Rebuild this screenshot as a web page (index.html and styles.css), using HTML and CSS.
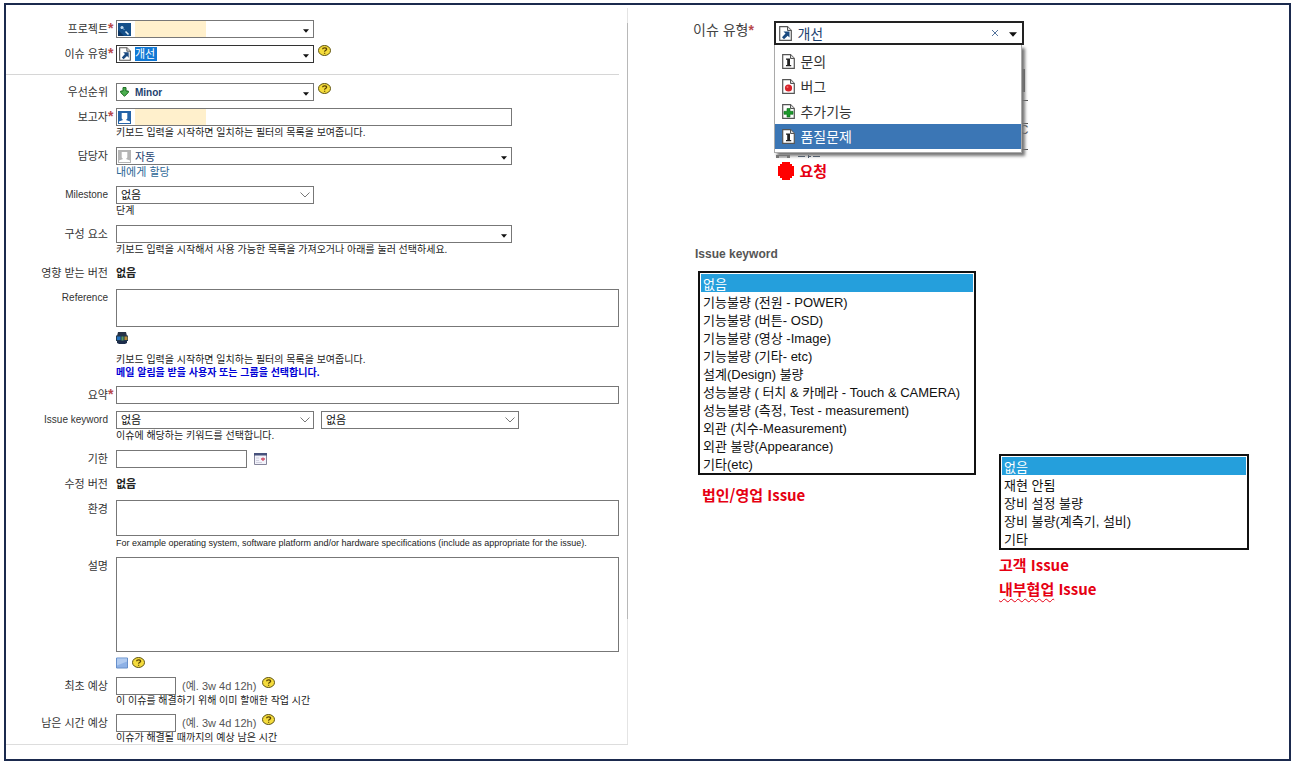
FILE: index.html
```html
<!DOCTYPE html>
<html lang="ko">
<head>
<meta charset="utf-8">
<title>Issue</title>
<link rel="stylesheet" href="styles.css">
</head>
<body>
<svg class="sprite" aria-hidden="true">
  <symbol id="help" viewBox="0 0 13 11"><ellipse cx="6.5" cy="5.5" rx="6" ry="5" fill="#f5dc3c" stroke="#5d5210"/><path d="M4.6 4.2C4.6 2.4 8.6 2.3 8.6 4.2C8.6 5.4 6.6 5.2 6.6 6.7M6.6 7.7V8.8" fill="none" stroke="#5a4300" stroke-width="1.3"/></symbol>
  <symbol id="project" viewBox="0 0 13 13"><path d="M0 0H13V13H0Z" fill="#15508a"/><path d="M0 7L6 13H0Z" fill="#0c3562"/><circle cx="4" cy="4.5" r="1.5" fill="#d3e6f5"/><path d="M4 4.5L6.5 7" stroke="#7fb0d8"/><path d="M7.5 8.5L10.5 11.5" stroke="#e4f1fa" stroke-width="1.6"/></symbol>
  <symbol id="doc" viewBox="0 0 13 15"><path d="M.7 .7H8.5L12.3 4.5V14.3H.7Z" fill="#fff" stroke="#555" stroke-width="1.2"/><path d="M8.5 .7V4.5H12.3" fill="#ddd" stroke="#555"/></symbol>
  <symbol id="improve" viewBox="0 0 13 15"><use href="#doc"/><path d="M4.5 5.5H10.5V11.5L8.7 9.8L5 13.2L3 11.2L6.5 7.6Z" fill="#1b4a80"/></symbol>
  <symbol id="inquiry" viewBox="0 0 13 15"><use href="#doc"/><path d="M4 4.5H8V11H9.2V12.3H4V11H5.2V5.8H4Z" fill="#222"/></symbol>
  <symbol id="bug" viewBox="0 0 13 15"><use href="#doc"/><circle cx="6.5" cy="9" r="3.6" fill="#d8222a"/><circle cx="5.5" cy="8" r="1" fill="#f07070"/></symbol>
  <symbol id="feature" viewBox="0 0 13 15"><use href="#doc"/><path d="M5 4.5H8V7.3H11V10.3H8V13H5V10.3H2V7.3H5Z" fill="#1c9a2c" stroke="#0c6a18" stroke-width=".6"/></symbol>
  <symbol id="minor" viewBox="0 0 9 10"><path d="M3 .6H6V4H8.3V5.5L4.5 9.3L.7 5.5V4H3Z" fill="#4caf50" stroke="#17691d"/></symbol>
  <symbol id="user" viewBox="0 0 13 13"><path d="M0 0H13V13H0Z" fill="currentColor"/><path d="M3.7 2H9.3V7.5L8 9L12 10.5V12H1V10.5L5 9L3.7 7.5Z" fill="#fff"/></symbol>
  <symbol id="users" viewBox="0 0 12 12"><path d="M2 0H10L11 4H1Z" fill="#273246"/><path d="M0 3.5H12V9H0Z" fill="#22384e"/><path d="M1 4.5H4.5V8H1Z" fill="#2471be"/><path d="M5.5 4.5H7.5V8.5H5.5Z" fill="#549a62"/><path d="M8.5 4.5H11.5V8H8.5Z" fill="#b58a34"/><path d="M1 9H11V11L9 12H3L1 11Z" fill="#1d2d4b"/></symbol>
  <symbol id="calendar" viewBox="0 0 13 12"><path d="M.5 .5H12.5V11.5H.5Z" fill="#f2f2fa" stroke="#85859b"/><path d="M0 0H13V2.5H0Z" fill="#47527c"/><path d="M7 6H11M9 4.5V8" stroke="#d0526a" stroke-width="1.3"/><path d="M2 5H5M2 7.5H5M2 9.5H8" stroke="#d0d0df"/></symbol>
  <symbol id="caret" viewBox="0 0 7 4"><path d="M0 0H7L3.5 4Z" fill="#111"/></symbol>
  <symbol id="preview" viewBox="0 0 12 11"><path d="M.5 .5H11.5V10.5H.5Z" fill="#8db1e6" stroke="#668fca"/><path d="M1 1H11V4L1 8Z" fill="#b1cbf0"/></symbol>
</svg>

<main class="frame">
  <form class="issue-form">
    <div class="row">
      <label class="label required" for="project">프로젝트</label>
      <div class="combo short"><svg class="i13"><use href="#project"/></svg><input id="project" class="masked"><button type="button" class="toggle" aria-label="열기"><svg><use href="#caret"/></svg></button></div>
    </div>
    <div class="row">
      <label class="label required" for="type">이슈 유형</label>
      <div class="line">
        <div class="combo short focus"><svg class="doc"><use href="#improve"/></svg><input id="type" class="marked" value="개선"><button type="button" class="toggle" aria-label="열기"><svg><use href="#caret"/></svg></button></div>
        <svg class="help"><use href="#help"/></svg>
      </div>
    </div>
    <hr class="rule">
    <div class="row">
      <label class="label" for="priority">우선순위</label>
      <div class="line">
        <div class="combo short"><svg class="arrow"><use href="#minor"/></svg><input id="priority" class="latin" value="Minor"><button type="button" class="toggle" aria-label="열기"><svg><use href="#caret"/></svg></button></div>
        <svg class="help"><use href="#help"/></svg>
      </div>
    </div>
    <div class="row">
      <label class="label required" for="reporter">보고자</label>
      <div>
        <div class="combo medium"><svg class="i13 blue"><use href="#user"/></svg><input id="reporter" class="masked"></div>
        <p class="hint">키보드 입력을 시작하면 일치하는 필터의 목록을 보여줍니다.</p>
      </div>
    </div>
    <div class="row">
      <label class="label" for="assignee">담당자</label>
      <div>
        <div class="combo medium"><svg class="i13 grey"><use href="#user"/></svg><input id="assignee" value="자동"><button type="button" class="toggle" aria-label="열기"><svg><use href="#caret"/></svg></button></div>
        <a class="assign" href="#assignee">내에게 할당</a>
      </div>
    </div>
    <div class="row">
      <label class="label latin-label" for="milestone">Milestone</label>
      <div>
        <select id="milestone" class="select"><option>없음</option></select>
        <p class="hint">단계</p>
      </div>
    </div>
    <div class="row">
      <label class="label" for="component">구성 요소</label>
      <div>
        <div class="combo medium"><input id="component"><button type="button" class="toggle" aria-label="열기"><svg><use href="#caret"/></svg></button></div>
        <p class="hint">키보드 입력을 시작해서 사용 가능한 목록을 가져오거나 아래를 눌러 선택하세요.</p>
      </div>
    </div>
    <div class="row">
      <span class="label">영향 받는 버전</span>
      <strong class="value">없음</strong>
    </div>
    <div class="row">
      <label class="label latin-label" for="reference">Reference</label>
      <div>
        <textarea id="reference" class="area reference"></textarea>
        <div class="tools people"><svg class="i12"><use href="#users"/></svg></div>
        <p class="hint">키보드 입력을 시작하면 일치하는 필터의 목록을 보여줍니다.</p>
        <p class="hint notice">메일 알림을 받을 사용자 또는 그룹을 선택합니다.</p>
      </div>
    </div>
    <div class="row">
      <label class="label required" for="summary">요약</label>
      <input id="summary" class="text">
    </div>
    <div class="row">
      <label class="label latin-label" for="keyword">Issue keyword</label>
      <div>
        <div class="pair">
          <select id="keyword" class="select"><option>없음</option></select>
          <select class="select" aria-label="Issue keyword 2"><option>없음</option></select>
        </div>
        <p class="hint">이슈에 해당하는 키워드를 선택합니다.</p>
      </div>
    </div>
    <div class="row">
      <label class="label" for="due">기한</label>
      <div class="due"><input id="due" class="text date"><svg class="cal"><use href="#calendar"/></svg></div>
    </div>
    <div class="row">
      <span class="label">수정 버전</span>
      <strong class="value">없음</strong>
    </div>
    <div class="row">
      <label class="label" for="env">환경</label>
      <div>
        <textarea id="env" class="area env"></textarea>
        <p class="hint en">For example operating system, software platform and/or hardware specifications (include as appropriate for the issue).</p>
      </div>
    </div>
    <div class="row">
      <label class="label" for="desc">설명</label>
      <div>
        <textarea id="desc" class="area desc"></textarea>
        <div class="tools"><svg class="i12"><use href="#preview"/></svg><svg class="help"><use href="#help"/></svg></div>
      </div>
    </div>
    <div class="row">
      <label class="label" for="original">최초 예상</label>
      <div>
        <div class="estimate"><input id="original" class="text time"><span class="example">(예. 3w 4d 12h)</span><svg class="help"><use href="#help"/></svg></div>
        <p class="hint tight">이 이슈를 해결하기 위해 이미 할애한 작업 시간</p>
      </div>
    </div>
    <div class="row">
      <label class="label" for="remaining">남은 시간 예상</label>
      <div>
        <div class="estimate"><input id="remaining" class="text time"><span class="example">(예. 3w 4d 12h)</span><svg class="help"><use href="#help"/></svg></div>
        <p class="hint tight">이슈가 해결될 때까지의 예상 남은 시간</p>
      </div>
    </div>
  </form>

  <section class="notes">
    <div class="type-row">
      <label class="type-label required" for="type-open">이슈 유형</label>
      <div class="type-field">
        <div class="picker"><svg class="doc-lg"><use href="#improve"/></svg><input id="type-open" value="개선"><button type="button" class="clear" aria-label="지우기"><svg viewBox="0 0 8 8"><path d="M1 1L7 7M7 1L1 7" stroke="#54749c"/></svg></button><button type="button" class="toggle big" aria-label="열기"><svg><use href="#caret"/></svg></button></div>
        <div class="menu-wrap">
          <div class="behind" aria-hidden="true"><i class="edge"></i><i class="dash one"></i><i class="dash two"></i><i class="dash three"></i><span class="cut">C</span></div>
          <ul class="menu">
            <li><button type="button"><svg class="doc-lg"><use href="#inquiry"/></svg>문의</button></li>
            <li><button type="button"><svg class="doc-lg"><use href="#bug"/></svg>버그</button></li>
            <li><button type="button"><svg class="doc-lg"><use href="#feature"/></svg>추가기능</button></li>
            <li><button type="button" class="active"><svg class="doc-lg"><use href="#inquiry"/></svg>품질문제</button></li>
          </ul>
        </div>
        <svg class="peek" viewBox="0 0 50 5" aria-hidden="true"><path d="M2 3.500H16" stroke="#777" stroke-width="3"/><path d="M5 4H13" stroke="#ccc" stroke-width="2"/><path d="M24 3.500H31M34.500 2V5M34.500 3.500H37M39 3.500H46" stroke="#3c4f66"/></svg>
        <p class="caption request"><svg viewBox="0 0 16 18"><path d="M4 0H12V2H14V4H16V14H14V16H12V18H4V16H2V14H0V4H2V2H4Z" fill="#f00"/></svg>요청</p>
      </div>
    </div>

    <div class="lists">
      <div class="sales">
        <label class="list-label" for="sales-list">Issue keyword</label>
        <select id="sales-list" class="list" size="11">
          <option selected>없음</option>
          <option>기능불량 (전원 - POWER)</option>
          <option>기능불량 (버튼- OSD)</option>
          <option>기능불량 (영상 -Image)</option>
          <option>기능불량 (기타- etc)</option>
          <option>설계(Design) 불량</option>
          <option>성능불량 ( 터치 &amp; 카메라 - Touch &amp; CAMERA)</option>
          <option>성능불량 (측정, Test - measurement)</option>
          <option>외관 (치수-Measurement)</option>
          <option>외관 불량(Appearance)</option>
          <option>기타(etc)</option>
        </select>
        <p class="caption">법인/영업 Issue</p>
      </div>
      <div class="customer">
        <select class="list" size="5" aria-label="고객 Issue">
          <option selected>없음</option>
          <option>재현 안됨</option>
          <option>장비 설정 불량</option>
          <option>장비 불량(계측기, 설비)</option>
          <option>기타</option>
        </select>
        <p class="caption">고객 Issue</p>
        <p class="caption"><span class="wavy">내부협업</span> Issue</p>
      </div>
    </div>
  </section>
</main>
</body>
</html>
```
FILE: styles.css
```css
* { box-sizing: border-box; }
body { margin: 0; background: #fff; color: #222; font: 11px/14px "Liberation Sans", "Noto Sans CJK KR", sans-serif; }
p, ul { margin: 0; padding: 0; list-style: none; }
svg { display: block; flex: none; }
input, select, textarea, button { font: inherit; color: inherit; margin: 0; padding: 0; border: 0; border-radius: 0; background: none; outline: 0; min-width: 0; }
.sprite { position: absolute; width: 0; height: 0; }

.frame { display: grid; grid-template-columns: minmax(0, 622fr) minmax(0, 661fr); align-items: start; min-height: calc(100vh - 7px); margin: 3px 4px 4px; padding-top: 3px; border: 2px solid #1b2a4e; }

.issue-form { display: flex; flex-direction: column; gap: 7px; padding: 12px 9px 0 0; border-bottom: 1px solid #ddd; background: linear-gradient(#e4e4e4 2%, #b8b8b8 2%, #b8b8b8 83%, #e4e4e4 83%) right / 1px 100% no-repeat; }
.row { display: grid; grid-template-columns: 102px minmax(0, 1fr); column-gap: 8px; }
.label { justify-self: end; position: relative; padding-top: 1px; line-height: 16px; color: #333; white-space: nowrap; }
.latin-label { font-size: 10px; }
.required::after { content: "*"; position: absolute; left: 100%; top: 0; font-size: 14px; font-weight: 700; color: #b8474a; }
.rule { width: 100%; height: 1px; margin: 4px 0 1px; border: 0; background: #d6d6d6; }

.line, .pair, .tools, .estimate, .due { display: flex; }
.line { gap: 4px; }
.combo { display: flex; align-items: center; gap: 4px; height: 18px; padding: 0 4px 0 1px; border: 1px solid #777; background: #fff; color: #1d426f; }
.combo input { flex: 1; height: 16px; }
.focus { border-color: #333; }
.short { width: 198px; }
.medium { width: 396px; max-width: 100%; }
.combo .masked, .combo .marked { flex: none; width: 71px; background: #fff0cc; }
.combo .marked { width: 22px; height: 14px; background: #1178d4; color: #fff; }
.combo .latin { font-size: 10px; font-weight: 700; }
.toggle { display: flex; align-items: center; height: 16px; margin-left: auto; padding-top: 3px; }
.toggle svg { width: 6px; height: 4px; }
.i13 { width: 13px; height: 13px; }
.i12 { width: 12px; height: 12px; }
.doc { width: 12px; height: 14px; margin-left: 1px; }
.arrow { width: 9px; height: 10px; margin: 0 2px; }
.blue { color: #2463a8; }
.grey { color: #b5b5b5; }
.help { width: 13px; height: 11px; }
.hint { line-height: 14px; font-size: 10px; color: #222; white-space: nowrap; }
.en { font-size: 9px; }
.tight { line-height: 12px; }
.notice { color: #0000d6; font-weight: 700; line-height: 12px; }
.assign { display: block; color: #2d6796; text-decoration: none; }
.text, .area { display: block; width: 100%; height: 18px; border: 1px solid #777; background: #fff; }
.area { resize: none; }
.reference { height: 38px; }
.env { height: 36px; }
.desc { height: 95px; }
.date { width: 131px; }
.time { width: 60px; }
.select { display: block; width: 198px; height: 18px; padding: 0 4px; border: 1px solid #777; appearance: none; background: url("data:image/svg+xml,%3Csvg xmlns='http://www.w3.org/2000/svg' width='10' height='6'%3E%3Cpath d='M.5 .5L5 5L9.5 .5' fill='none' stroke='%23777'/%3E%3C/svg%3E") no-repeat right 3px center; color: #111; }
.pair { gap: 7px; }
.value { line-height: 18px; }
.tools { gap: 4px; padding: 5px 0 1px; }
.people { padding-bottom: 9px; }
.due { align-items: center; gap: 7px; }
.cal { width: 13px; height: 12px; }
.estimate { gap: 6px; }
.example { padding-top: 2px; color: #555; }

.notes { padding: 13px 0 0 65px; }
.type-row { display: flex; gap: 26px; }
.type-label { position: relative; flex: none; font-size: 14px; line-height: 18px; color: #444; }
.type-field { width: 250px; }
.picker { display: flex; align-items: center; gap: 5px; height: 24px; padding: 0 5px 0 3px; border: 2px solid #222; color: #1d426f; font-size: 14px; background: #fff; }
.picker input { flex: 1; height: 20px; }
.clear { width: 8px; height: 8px; margin-right: 5px; }
.clear svg { width: 8px; height: 8px; }
.big svg { width: 8px; height: 5px; }
.doc-lg { width: 13px; height: 15px; }
.menu-wrap { position: relative; margin-right: 2px; }
.menu { position: relative; padding: 4px 0 3px; border: 1px solid #aaa; border-top: 0; background: #fff; box-shadow: 3px 3px 3px #777; }
.menu button { display: flex; align-items: center; gap: 5px; width: 100%; height: 25px; padding-left: 7px; font-size: 14px; color: #333; }
.menu .active { background: #3b76b5; color: #fff; }
.behind i { position: absolute; background: #555; }
.behind .edge { left: 100%; top: 24px; width: 3px; height: 23px; }
.behind .dash { left: 100%; width: 6px; height: 1px; }
.behind .one { top: 55px; }
.behind .two { top: 78px; }
.behind .three { top: 104px; }
.cut { position: absolute; right: -6px; top: 78px; font-size: 12px; color: #555; }
.peek { width: 50px; height: 5px; }
.caption { color: #e60012; font: 700 15px/24px "Noto Sans CJK KR", sans-serif; }
.request { display: flex; align-items: center; gap: 5px; padding: 1px 0 0 4px; }
.request svg { width: 16px; height: 18px; }

.lists { display: flex; align-items: flex-start; gap: 23px; padding-top: 64px; }
.list-label { display: block; margin-bottom: 9px; padding-left: 2px; font-size: 12px; line-height: 15px; font-weight: 700; color: #555; }
.sales { width: 283px; padding-left: 5px; }
.sales .list-label { margin-left: -5px; }
.sales .caption { padding: 8px 0 0 4px; }
.customer { width: 250px; padding-top: 207px; }
.customer .caption:first-of-type { padding-top: 3px; }
.list { display: block; width: 100%; height: auto; padding: 1px; border: 2px solid #111; overflow: hidden; font-size: 13px; color: #111; background: #fff; scrollbar-width: none; }
.list option { height: 18px; min-height: 18px; padding: 0 2px; }
.list option:checked { background: #259fdc linear-gradient(#259fdc, #259fdc); color: #fff; }
.wavy { text-decoration: underline wavy #e60012 1px; text-underline-offset: 3px; }
```
